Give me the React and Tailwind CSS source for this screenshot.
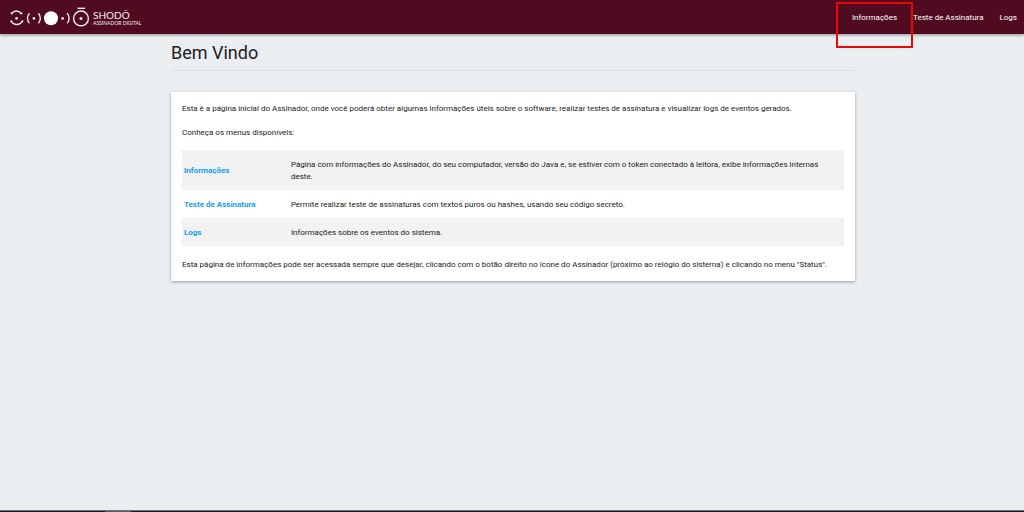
import React from 'react';

const navLinks = [
  { label: 'Informações', href: '#informacoes', highlighted: true },
  { label: 'Teste de Assinatura', href: '#teste' },
  { label: 'Logs', href: '#logs' },
];

const menus = [
  {
    label: 'Informações',
    href: '#informacoes',
    description:
      'Página com informações do Assinador, do seu computador, versão do Java e, se estiver com o token conectado à leitora, exibe informações internas deste.',
  },
  {
    label: 'Teste de Assinatura',
    href: '#teste',
    description: 'Permite realizar teste de assinaturas com textos puros ou hashes, usando seu código secreto.',
  },
  {
    label: 'Logs',
    href: '#logs',
    description: 'Informações sobre os eventos do sistema.',
  },
];

const Logo = () => (
  <a href="#inicio" className="flex items-center gap-[3px] text-[#f6edf0]">
    <svg width="80" height="22" viewBox="0 0 80 22" fill="none" stroke="currentColor" aria-hidden="true">
      <g strokeWidth="1.4">
        <path d="M1.2 7.4Q6.6 2.6 11.4 7.4" />
        <path d="M1.2 15.2A6.4 6.4 0 0 0 12.4 15.2" />
        <path d="M19.4 7.2A7.5 7.5 0 0 0 19.4 17.2" />
        <path d="M28.4 7.2A7.5 7.5 0 0 1 28.4 17.2" />
        <path d="M57.2 7.2A7.5 7.5 0 0 1 57.2 17.2" />
        <circle cx="71" cy="12.4" r="7.4" />
        <path d="M67.5 2.3H75" />
      </g>
      <g fill="currentColor" stroke="none">
        <circle cx="1.6" cy="7.4" r="1" />
        <circle cx="11.4" cy="7.4" r="1" />
        <circle cx="1.2" cy="15.2" r="1" />
        <circle cx="12.4" cy="15.2" r="1" />
        <circle cx="6.6" cy="12.4" r="1.4" />
        <circle cx="23.9" cy="12.4" r="1.3" />
        <circle cx="41" cy="12.2" r="7" fill="#fff" />
        <circle cx="52.6" cy="12.4" r="1.3" />
        <circle cx="71" cy="12.4" r="1.5" />
      </g>
    </svg>
    <span className="flex flex-col pt-[2px] font-['Lato',sans-serif] whitespace-nowrap">
      <span className="text-[10px] leading-[9px]">SHODŌ</span>
      <span className="text-[5px] leading-[6px]">ASSINADOR DIGITAL</span>
    </span>
  </a>
);

const Header = () => (
  <header className="flex h-[34px] items-center justify-between bg-[#500b20] pl-[10px] shadow-[0_1px_3px_rgba(0,0,0,0.4)]">
    <Logo />
    <nav className="flex h-full text-[8px] text-white">
      {navLinks.map((link) => (
        <a
          key={link.label}
          href={link.href}
          className="relative flex items-center px-2 pt-px whitespace-nowrap last:pr-[7px]"
        >
          {link.label}
          {link.highlighted && (
            <span className="absolute top-[2px] -right-2 -left-2 h-[46px] border-2 border-[#f00505]" />
          )}
        </a>
      ))}
    </nav>
  </header>
);

const App = () => {
  return (
    <div className="flex min-h-screen flex-col bg-[#ebeef1] font-['Roboto',sans-serif] text-[8px] leading-3 text-[#212121]">
      <Header />
      <main className="mx-auto w-[67%] flex-1 pl-[2px]">
        <h1 className="mt-[7px] border-b border-[#dde0e3] pb-[5px] text-[18px] leading-6">Bem Vindo</h1>
        <section className="mt-[21px] bg-white px-[11px] pt-[11px] pb-[10px] shadow-[0_1px_3px_rgba(0,0,0,0.35)]">
          <p className="mb-3">
            Esta é a página inicial do Assinador, onde você poderá obter algumas informações úteis sobre o software,
            realizar testes de assinatura e visualizar logs de eventos gerados.
          </p>
          <p className="mb-[11px]">Conheça os menus disponíveis:</p>
          <table className="mb-[13px] w-full table-fixed">
            <tbody>
              {menus.map((menu) => (
                <tr key={menu.label} className="odd:bg-[#f2f2f2]">
                  <th scope="row" className="w-[16%] px-[2px] pt-[9px] pb-[7px] text-left font-bold">
                    <a href={menu.href} className="text-[#119fe6]">
                      {menu.label}
                    </a>
                  </th>
                  <td className="px-[3px] pt-[9px] pb-[7px]">{menu.description}</td>
                </tr>
              ))}
            </tbody>
          </table>
          <p>
            Esta página de informações pode ser acessada sempre que desejar, clicando com o botão direito no ícone do
            Assinador (próximo ao relógio do sistema) e clicando no menu "Status".
          </p>
        </section>
      </main>
      <footer className="h-[2px] border-t border-[#6c7380] bg-[#161926] pl-[105px]">
        <div className="h-px w-[26px] bg-[#555963]" />
      </footer>
    </div>
  );
};

export default App;
